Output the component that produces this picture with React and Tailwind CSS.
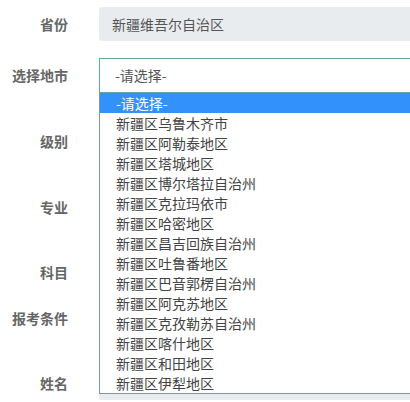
import React from "react";

const cities = [
  "新疆区乌鲁木齐市",
  "新疆区阿勒泰地区",
  "新疆区塔城地区",
  "新疆区博尔塔拉自治州",
  "新疆区克拉玛依市",
  "新疆区哈密地区",
  "新疆区昌吉回族自治州",
  "新疆区吐鲁番地区",
  "新疆区巴音郭楞自治州",
  "新疆区阿克苏地区",
  "新疆区克孜勒苏自治州",
  "新疆区喀什地区",
  "新疆区和田地区",
  "新疆区伊犁地区",
];

function Row({ label, children, className }) {
  return (
    <div className={"flex items-center " + className}>
      <div className="w-[68px] shrink-0 text-right text-[14px] font-bold text-[#666]">{label}</div>
      <div className="ml-[31px] flex-1">{children}</div>
    </div>
  );
}

export default function App() {
  const font = { fontFamily: '"Microsoft YaHei", "Noto Sans CJK SC", sans-serif' };
  return (
    <div className="relative h-[402px] w-[410px] overflow-hidden bg-white" style={font}>
      <div className="w-[520px] pt-[7px]">
        <Row label="省份" className="h-[34px]">
          <div className="flex h-[34px] items-center rounded-[3px] bg-[#e9ecef] pl-[13px] text-[14px] text-[#555]">
            新疆维吾尔自治区
          </div>
        </Row>
        <Row label="选择地市" className="mt-[17px] h-[35px]">
          <div className="flex h-[35px] items-center border border-[#5fa9a0] pl-[15px] text-[14px] text-[#555]">
            -请选择-
          </div>
        </Row>
        <Row label="级别" className="mt-[31px] h-[34px]">
          <div className="h-[34px] rounded-[3px] border border-[#ccc]" />
        </Row>
        <Row label="专业" className="mt-[32px] h-[34px]">
          <div className="h-[34px] rounded-[3px] border border-[#ccc]" />
        </Row>
        <Row label="科目" className="mt-[31px] h-[34px]">
          <div className="h-[34px] rounded-[3px] border border-[#ccc]" />
        </Row>
        <Row label="报考条件" className="mt-[12px] h-[34px]">
          <div className="h-[34px] rounded-[3px] border border-[#ccc]" />
        </Row>
        <Row label="姓名" className="mt-[31px] h-[34px]">
          <div className="h-[34px] rounded-[3px] bg-[#e9ecef]" />
        </Row>
      </div>

      <div className="absolute left-[99px] top-[93px] w-[330px] border-x border-b border-[#8592a0] bg-white text-[14px] leading-[20px]">
        <div className="h-[20px] bg-[#3391fb] pl-[16px] text-white">-请选择-</div>
        {cities.map((c) => (
          <div key={c} className="h-[20px] pl-[16px] text-[#444]">
            {c}
          </div>
        ))}
      </div>
    </div>
  );
}
